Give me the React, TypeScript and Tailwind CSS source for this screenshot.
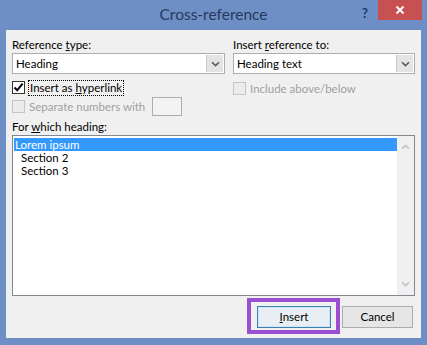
import React from 'react';

const font = { fontFamily: 'Lato, "Liberation Sans", Arial, sans-serif' };

function Chevron({ up = false, color = '#5a5a5a' }: { up?: boolean; color?: string }) {
  return (
    <svg width="9" height="6" viewBox="0 0 9 6" className={up ? 'rotate-180' : ''}>
      <path d="M1 1.2 L4.5 4.6 L8 1.2" fill="none" stroke={color} strokeWidth="1.6" />
    </svg>
  );
}

function Combo({ value, width }: { value: string; width: string }) {
  return (
    <div className={`${width} h-[21px] flex items-stretch bg-white border border-[#abadb3]`}>
      <div className="flex-1 flex items-center pl-[3px] text-black">{value}</div>
      <div className="w-[17px] my-px mr-px flex items-center justify-center bg-[#e4e4e4] border-l border-[#c8c8c8]">
        <Chevron />
      </div>
    </div>
  );
}

function Check({ checked = false, disabled = false }: { checked?: boolean; disabled?: boolean }) {
  return (
    <div
      className={`w-[13px] h-[13px] shrink-0 flex items-center justify-center border ${
        disabled ? 'border-[#c4c4c4] bg-[#ececec]' : 'border-[#333] bg-white'
      }`}
    >
      {checked && (
        <svg width="11" height="11" viewBox="0 0 11 11">
          <path d="M1.5 5.5 L4.2 8.3 L9.6 1.6" fill="none" stroke="#000" strokeWidth="2" />
        </svg>
      )}
    </div>
  );
}

export default function App() {
  return (
    <div className="w-[427px] h-[345px] bg-[#6e8fc6] flex flex-col overflow-hidden" style={font}>
      {/* Title bar */}
      <div className="relative h-[30px] flex items-center justify-center">
        <span className="text-[15.5px] text-[#27395a] pb-[1px]">Cross-reference</span>
        <span className="absolute left-[362px] top-[4px] text-[13px] font-bold text-[#1d3a6b]">?</span>
        <div className="absolute left-[378px] top-0 w-[44px] h-[20px] bg-[#c75050] flex items-center justify-center">
          <svg width="10" height="10" viewBox="0 0 10 10">
            <path d="M1.5 1.5 L8.5 8.5 M8.5 1.5 L1.5 8.5" stroke="#fff" strokeWidth="2" />
          </svg>
        </div>
      </div>

      {/* Dialog body */}
      <div className="ml-[6px] w-[415px] h-[308px] bg-[#f0f0f0] pl-[6px] pt-[8px] text-[11.5px] text-black">
        <div className="flex gap-[8px]">
          <div className="flex flex-col">
            <div className="h-[15px] leading-[14px]">
              Reference <u>t</u>ype:
            </div>
            <Combo value="Heading" width="w-[213px]" />
            <div className="mt-[7px] h-[13px] flex items-center gap-[3px]">
              <Check checked />
              <span className="border border-dotted border-black px-[1px] leading-[14px]">
                Insert as <u>h</u>yperlink
              </span>
            </div>
            <div className="mt-[3px] h-[19px] flex items-center">
              <Check disabled />
              <span className="ml-[4px] w-[119px] whitespace-nowrap text-[#a0a0a0]">Separate numbers with</span>
              <div className="ml-[4px] w-[30px] h-[19px] border border-[#adadad] bg-[#f3f3f3]" />
            </div>
          </div>
          <div className="flex flex-col">
            <div className="h-[15px] leading-[14px]">
              Insert <u>r</u>eference to:
            </div>
            <Combo value="Heading text" width="w-[182px]" />
            <div className="mt-[8px] h-[13px] flex items-center gap-[4px]">
              <Check disabled />
              <span className="text-[#a0a0a0]">Include above/below</span>
            </div>
          </div>
        </div>

        <div className="mt-[4px] h-[15px] leading-[14px]">
          For <u>w</u>hich heading:
        </div>
        <div className="w-[403px] h-[161px] flex bg-white border border-[#828790]">
          <div className="flex-1 pt-[2px] pl-px leading-[13px]">
            <div className="h-[13px] bg-[#3399ff] text-white pl-[1px]">Lorem ipsum</div>
            <div className="h-[13px] pl-[7px]">Section 2</div>
            <div className="h-[13px] pl-[7px]">Section 3</div>
          </div>
          <div className="w-[17px] bg-[#f0f0f0] flex flex-col items-center justify-between py-[8px]">
            <Chevron up color="#c2c2c2" />
            <Chevron color="#c2c2c2" />
          </div>
        </div>

        <div className="flex mt-[2px]">
          <div className="ml-[235px] border-4 border-[#9a4fd3] pt-[4px] pl-[6px] pr-[5px] pb-[2px]">
            <div className="w-[74px] h-[22px] flex items-center justify-center border border-[#3c7fb1] bg-[#e8eef4] shadow-[inset_0_0_0_1px_#cfe6f7]">
              <span>
                <u>I</u>nsert
              </span>
            </div>
          </div>
          <div className="ml-[2px] mt-[8px] w-[71px] h-[22px] flex items-center justify-center border border-[#acacac] bg-[#e6e6e6]">
            Cancel
          </div>
        </div>
      </div>
    </div>
  );
}
